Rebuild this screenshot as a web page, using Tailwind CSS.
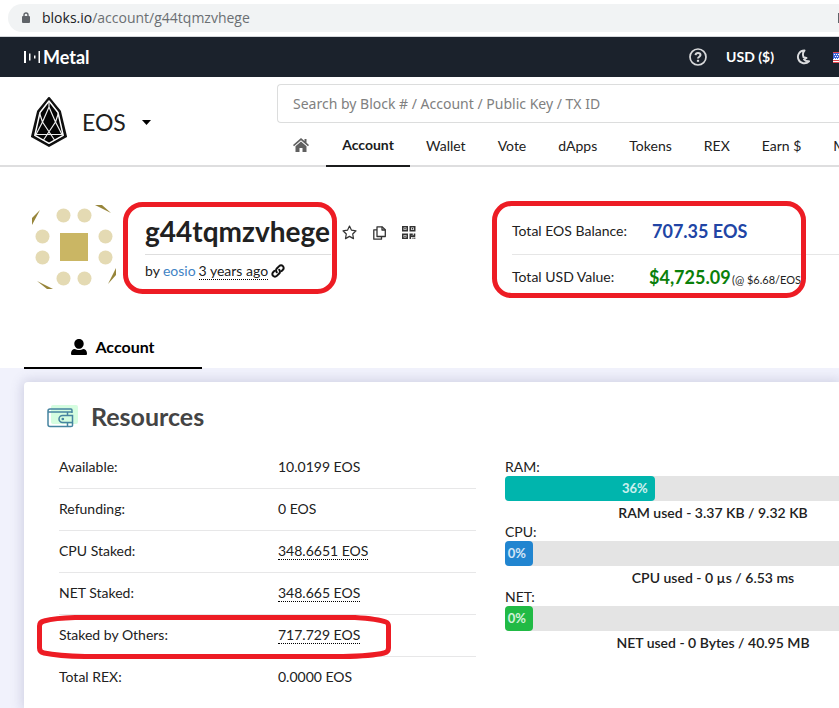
<!DOCTYPE html>
<html lang="en">
<head>
<meta charset="utf-8">
<meta name="viewport" content="width=device-width, initial-scale=1">
<title>g44tqmzvhege - EOS account</title>
<script src="https://cdn.jsdelivr.net/npm/@tailwindcss/browser@4"></script>
</head>
<body class="bg-[#f1f2fc] font-['Lato',sans-serif] text-sm text-[#212121]">
<div class="relative flex min-h-screen flex-col overflow-hidden">

  <!-- Address bar -->
  <div class="flex h-[37px] items-start border-b border-[#d5d8dc] bg-white pt-1 pl-2">
    <div class="flex h-7 flex-1 items-center gap-3 rounded-l-full bg-[#f1f3f4] pl-[14px]">
      <svg class="h-3 w-2" viewBox="0 0 8 12" fill="none"><rect y="4" width="8" height="7" rx="1" fill="#5f6368"/><path d="M2 5V3a2 2 0 0 1 4 0v2" stroke="#5f6368" stroke-width="1.4"/></svg>
      <span class="font-['Open_Sans',sans-serif] text-sm text-[#6b6f73]"><span class="text-[#202124]">bloks.io</span>/account/g44tqmzvhege</span>
      <span class="ml-auto h-[10px] w-px bg-[#5f6368]"></span>
    </div>
  </div>

  <!-- Top bar -->
  <div class="flex h-10 items-center justify-between bg-[#1b222c] pl-6 text-white">
    <a href="#" class="flex items-center gap-[3px]" aria-label="Metal">
      <svg class="h-3 w-4" viewBox="0 0 16 12" fill="#fff"><path d="M0 0h2v12H0zM5 2.500h1.500v7H5zM10 4.500h1.500v3H10zM14.500 0H16v12h-1.500z"/></svg>
      <span class="text-lg leading-5 font-bold">Metal</span>
    </a>
    <div class="flex items-center">
      <button aria-label="Help" class="mr-[19px]">
        <svg class="h-[18px] w-[18px]" viewBox="0 0 18 18" fill="none" stroke="#d9dadc"><circle cx="9" cy="9" r="8" stroke-width="1.700"/><path d="M6.500 7.200C6.700 5.600 7.600 5 9 5s2.500.8 2.500 2.100C11.500 8.800 9 8.700 9 10.600" stroke-width="2"/><path d="M9 11.800v2" stroke-width="2.200"/></svg>
      </button>
      <button class="mr-[22px] text-sm font-bold">USD ($)</button>
      <button aria-label="Dark mode" class="mr-[23px]">
        <svg class="h-4 w-[14px]" viewBox="0 0 14 16" fill="none" stroke="#dcdddf" stroke-width="1.900" stroke-linejoin="round"><path d="M8.500 1.500A6.400 6.400 0 1 0 13 12.300Q9.500 12.500 8 10.500L10.500 9 7.500 8.200Q6 4 8.500 1.500Z"/></svg>
      </button>
      <svg class="h-[11px] w-[6px]" viewBox="0 0 6 11"><path fill="#fff" d="M0 0h6v11H0z"/><path fill="#3f66d8" d="M0 1h6v6H0z"/><path stroke="#fff" stroke-dasharray="1 1" d="M1 2.500h5M2 4.500h4M1 6.500h5"/><path stroke="#e0464f" d="M0 .5h6M0 8.500h6M0 10.500h6"/></svg>
    </div>
  </div>

  <!-- Header -->
  <header class="flex h-[90px] items-start border-b-2 border-[#dededf] bg-white">
    <div class="flex w-[277px] shrink-0 items-center pt-5 pl-[31px]">
      <svg class="h-[50px] w-9" viewBox="0 0 36 50" fill="none" stroke-linejoin="round">
        <path d="M18 1 7 14.500 1 39.500 18 49l17-9.500L29 14.500Z" fill="#050505" stroke="#111" stroke-width="2"/>
        <path d="M18 4 9 15.500 3.800 38.300 18 46.300l14.200-8L27 15.500Z" stroke="#fff" stroke-width="1.500"/>
        <path d="M18 4v6L11.500 25 23.500 43M18 10l6.500 15-12 18M8.500 16l3 9L5 37.500M27.500 16l-3 9L31 37.500M4 37.500h28" stroke="#eee" stroke-width="1.200"/>
      </svg>
      <button class="ml-[15px] flex items-center gap-4 text-[23px] leading-8 text-[#212121]">EOS
        <svg class="h-[5px] w-[9px]" viewBox="0 0 9 5"><path d="M0 0h9L4.500 5Z" fill="#000"/></svg>
      </button>
    </div>
    <div class="min-w-0 flex-1">
      <div class="mt-[7px] h-[39px]">
        <input type="text" aria-label="Search" placeholder="Search by Block # / Account / Public Key / TX ID" class="h-full w-full rounded-l border border-r-0 border-[#dcdddd] px-[15px] font-['Noto_Sans',sans-serif] text-sm text-[#333] placeholder:text-[#808080]">
      </div>
      <nav class="flex h-11 items-stretch leading-5 whitespace-nowrap">
        <a href="#" aria-label="Home" class="flex w-[49px] shrink-0 items-center pl-4">
          <svg class="h-[14px] w-4" viewBox="0 0 16 14" fill="#606060"><path d="M8 0 0 7l1 1.200 7-6 7 6L16 7l-2.500-2.200V1h-2v2Z"/><path d="m8 3.400-5.500 4.800V14h4v-4h3v4h4V8.200Z"/></svg>
        </a>
        <a href="#" class="flex w-[84px] shrink-0 items-center justify-center border-b-2 border-[#1b1c1d] pt-[2px] font-bold text-[#1b1c1d]">Account</a>
        <div class="flex pt-[2px]">
          <a href="#" class="flex items-center px-4">Wallet</a>
          <a href="#" class="flex items-center px-4">Vote</a>
          <a href="#" class="flex items-center px-4">dApps</a>
          <a href="#" class="flex items-center px-4">Tokens</a>
          <a href="#" class="flex items-center px-4">REX</a>
          <a href="#" class="flex items-center px-4">Earn $</a>
          <a href="#" class="flex items-center px-4">More</a>
        </div>
      </nav>
    </div>
  </header>

  <!-- Account summary -->
  <section class="bg-white">
    <div class="flex h-[160px] items-start pl-8">
      <svg class="mt-[38px] h-[84px] w-[84px] shrink-0" viewBox="0 0 84 84">
        <g fill="#e4dab3"><circle cx="31.500" cy="10.500" r="7"/><circle cx="52.500" cy="10.500" r="7"/><circle cx="10.500" cy="31.500" r="7"/><circle cx="73.500" cy="31.500" r="7"/><circle cx="10.500" cy="52.500" r="7"/><circle cx="73.500" cy="52.500" r="7"/><circle cx="31.500" cy="73.500" r="7"/><circle cx="52.500" cy="73.500" r="7"/></g>
        <path fill="#cab664" d="M28 28h28v28H28z"/>
        <path fill="#97853a" d="M0 20v-7L8 5ZM63 0h7l9 8ZM84 63v7l-8 9ZM5 76l16 8h-6Z"/>
      </svg>
      <div class="mt-[45px] ml-[29px] w-[186px] shrink-0">
        <h1 class="border-b border-[#dedede] pb-[3px] text-[28px] leading-[39px] font-bold whitespace-nowrap">g44tqmzvhege</h1>
        <p class="mt-[6px] flex items-center gap-[3px] leading-5 whitespace-nowrap">by <a href="#" class="text-[#4183c4]">eosio</a> <span class="border-b border-dotted border-black leading-[17px]">3 years ago</span>
          <svg class="h-[14px] w-[14px]" viewBox="0 0 14 14" fill="none" stroke="#111" stroke-width="2" stroke-linecap="round"><path d="M5.800 8.200a2.600 2.600 0 0 1 0-3.700l2.400-2.400a2.600 2.600 0 0 1 3.700 3.700l-1.300 1.300"/><path d="M8.200 5.800a2.600 2.600 0 0 1 0 3.700l-2.400 2.400a2.600 2.600 0 0 1-3.700-3.700l1.300-1.300"/></svg>
        </p>
      </div>
      <div class="mt-[58px] ml-[11px] flex w-[170px] shrink-0 items-center gap-4">
        <button aria-label="Favourite"><svg class="h-[15px] w-[15px]" viewBox="0 0 15 15" fill="none" stroke="#333" stroke-width="1.200" stroke-linejoin="round"><path d="m7.500 1 2 4.200 4.500.6-3.300 3.200.8 4.600-4-2.200-4 2.200.8-4.600L1 5.800l4.500-.6Z"/></svg></button>
        <button aria-label="Copy"><svg class="h-[14px] w-[13px]" viewBox="0 0 13 14" fill="none" stroke="#333" stroke-width="1.300" stroke-linejoin="round"><path d="M4 .8h5l3.300 3V10.500H4Z"/><path d="M9 .8V4h3.300M4 3.800H.8v9.400H8.500V10.500"/></svg></button>
        <button aria-label="QR code"><svg class="h-[13px] w-[14px]" viewBox="0 0 14 13" fill="none" stroke="#333" stroke-width="1.600"><path d="M.8.8h4.400v3.900H.8zM8.300.8h4.400v3.900H8.300zM.8 8.300h4.400v3.900H.8z"/><path d="M2.300 2.700h1.400M9.800 2.700h1.400M2.300 10.300h1.400M8.300 7.500V13M8.300 8.300h2.500M12.500 7.500v3.300M8.300 10.100h4.700M10.500 12.300h1M12.300 12.300h1"/></svg></button>
      </div>
      <dl class="mt-[41px] flex-1 whitespace-nowrap">
        <div class="flex h-[47px] items-center border-b border-[#e6e6e6]"><dt class="w-[140px] shrink-0">Total EOS Balance:</dt><dd class="text-lg font-bold text-[#2145a5]">707.35 EOS</dd></div>
        <div class="flex h-[44px] items-center"><dt class="w-[137px] shrink-0">Total USD Value:</dt><dd class="text-lg font-bold text-[#0a800a]">$4,725.09 <span class="-ml-[3px] text-[11px] font-normal text-[#212121]">(@ $6.68/EOS)</span></dd></div>
      </dl>
    </div>
    <div class="h-[41px] pl-6">
      <a href="#" class="flex h-[42px] w-[178px] items-center justify-center gap-2 border-b-2 border-black text-base leading-5 font-bold text-black">
        <svg class="h-4 w-4" viewBox="0 0 16 16"><path d="M3.300 4.700C3.300 2 5.400 0 8 0s4.700 2 4.700 4.700S10.600 9.800 8 9.800 3.300 7.400 3.300 4.700ZM0 14.500C0 12 1.500 10 4 10c1 .7 2.500 1 4 1s3-.3 4-1c2.500 0 4 2 4 4.500 0 1-.5 1.500-1.500 1.500h-13C.5 16 0 15.500 0 14.500Z"/></svg>
        Account
      </a>
    </div>
  </section>

  <!-- Resources card -->
  <main class="mt-[14px] ml-6 flex-1 rounded-tl bg-white shadow-[0_0_12px_2px_rgba(90,90,140,0.22)]">
    <div class="flex items-center gap-[13px] pt-[14px] pl-[23px]">
      <svg class="h-[30px] w-[31px]" viewBox="0 0 31 30" fill="none" stroke="#4684a0" stroke-width="1.500">
        <rect x="4" y="4" width="27" height="19" rx="2" fill="#d5fde0" stroke="none"/>
        <path d="M25 12V9.500Q25 8 24 8H3Q1 8 1 10v13.500q0 2 2 2h21q1.500 0 1.500-1V22M1 11h24M20.500 11v4M20.500 22v3.500"/>
        <path d="M25.500 14.500H15.500a3.500 3.500 0 0 0 0 7h10Z"/><circle cx="15.800" cy="18" r=".6"/>
      </svg>
      <h2 class="text-[25px] leading-10 font-bold text-[#444]">Resources</h2>
    </div>
    <div class="mt-[10px] flex items-start gap-[29px] pl-[35px]">
      <table class="w-[417px] shrink-0 text-left">
        <tbody>
          <tr class="h-[42px] border-b border-[#e7e7e8]"><th scope="row" class="w-[219px] font-normal">Available:</th><td>10.0199 EOS</td></tr>
          <tr class="h-[42px] border-b border-[#e7e7e8]"><th scope="row" class="font-normal">Refunding:</th><td>0 EOS</td></tr>
          <tr class="h-[42px] border-b border-[#e7e7e8]"><th scope="row" class="font-normal">CPU Staked:</th><td><span class="border-b border-dotted border-black">348.6651 EOS</span></td></tr>
          <tr class="h-[42px] border-b border-[#e7e7e8]"><th scope="row" class="font-normal">NET Staked:</th><td><span class="border-b border-dotted border-black">348.665 EOS</span></td></tr>
          <tr class="h-[42px] border-b border-[#e7e7e8]"><th scope="row" class="font-normal">Staked by Others:</th><td><span class="border-b border-dotted border-black">717.729 EOS</span></td></tr>
          <tr class="h-[42px]"><th scope="row" class="font-normal">Total REX:</th><td>0.0000 EOS</td></tr>
        </tbody>
      </table>
      <div class="mt-3 min-w-[416px] flex-1">
        <div class="leading-[18px]">RAM:</div>
        <div class="h-[25px] rounded bg-[#e4e4e4]"><div class="flex h-full items-center justify-end rounded bg-[#00b5ad] pr-[7px] text-[13px] font-bold text-white/80" style="width:36%">36%</div></div>
        <div class="pt-[2px] text-center leading-5 font-semibold">RAM used - 3.37 KB / 9.32 KB</div>
        <div class="leading-[18px]">CPU:</div>
        <div class="h-[25px] rounded bg-[#e4e4e4]"><div class="flex h-full w-7 items-center justify-end rounded bg-[#2185d0] pr-[7px] text-[13px] font-bold text-white/80">0%</div></div>
        <div class="pt-[2px] text-center leading-5 font-semibold">CPU used - 0 µs / 6.53 ms</div>
        <div class="leading-[18px]">NET:</div>
        <div class="h-[25px] rounded bg-[#e4e4e4]"><div class="flex h-full w-7 items-center justify-end rounded bg-[#21ba45] pr-[7px] text-[13px] font-bold text-white/80">0%</div></div>
        <div class="pt-[2px] text-center leading-5 font-semibold">NET used - 0 Bytes / 40.95 MB</div>
      </div>
    </div>
  </main>

  <!-- Highlight marks -->
  <svg class="pointer-events-none absolute top-0 left-0 h-[708px] w-[839px]" viewBox="0 0 839 708" fill="none" stroke="#ed1c24" stroke-width="5">
    <rect x="125.500" y="204.500" width="209" height="87" rx="17"/>
    <rect x="494.500" y="203.500" width="309" height="92" rx="17"/>
    <path d="M75 617.500H355Q378 619 386 622Q388.500 623 388.500 626V648Q388.500 652 384 653Q372 656 343 656.500H85Q58 656 44 653Q39.500 652 39.500 648V626Q39.500 622 44 621Q55 618 75 617.500Z"/>
  </svg>
</div>
</body>
</html>
